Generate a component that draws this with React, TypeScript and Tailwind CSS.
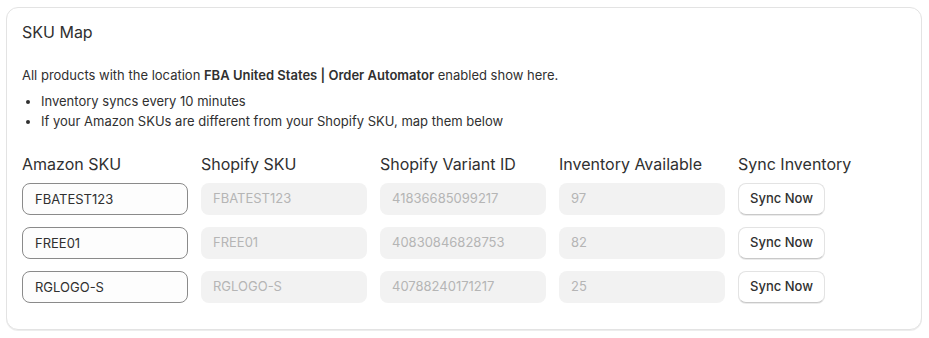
const rows = [
	{ amazon: "FBATEST123", shopify: "FBATEST123", variant: "41836685099217", qty: "97" },
	{ amazon: "FREE01", shopify: "FREE01", variant: "40830846828753", qty: "82" },
	{ amazon: "RGLOGO-S", shopify: "RGLOGO-S", variant: "40788240171217", qty: "25" },
];

const headers = ["Amazon SKU", "Shopify SKU", "Shopify Variant ID", "Inventory Available", "Sync Inventory"];

export default function App() {
	return (
		<div className="min-h-[338px] bg-white pl-[6px] pt-[7px] font-['Inter',sans-serif] text-[#303030]">
			<div className="w-[916px] rounded-[12px] border border-[#e3e3e3] bg-white px-[15px] pt-[12px] pb-[26px] shadow-[0_1px_0_rgba(0,0,0,0.07)]">
				{/* Title */}
				<h2 className="text-[16px] leading-[24px] font-normal">SKU Map</h2>

				{/* Description */}
				<p className="mt-[21px] text-[13px] leading-[20px]">
					All products with the location <span className="font-semibold">FBA United States | Order Automator</span>{" "}
					enabled show here.
				</p>
				<ul className="mt-[6px] list-disc pl-[19px] text-[13px] leading-[20px]">
					<li>Inventory syncs every 10 minutes</li>
					<li>If your Amazon SKUs are different from your Shopify SKU, map them below</li>
				</ul>

				{/* Table */}
				<div className="mt-[21px] grid grid-cols-[166px_166px_166px_166px_auto] gap-x-[13px] gap-y-[12px]">
					{headers.map((h) => (
						<div key={h} className="-mb-[5px] text-[16px] leading-[24px]">
							{h}
						</div>
					))}
					{rows.map((r) => (
						<div key={r.amazon} className="contents">
							<input
								defaultValue={r.amazon}
								className="h-[32px] w-full rounded-[8px] border border-[#8a8a8a] bg-[#fdfdfd] px-[12px] text-[13px] text-[#303030] outline-none"
							/>
							<div className="flex h-[32px] items-center rounded-[8px] bg-[#f2f2f2] px-[12px] text-[13px] text-[#b5b5b5]">
								{r.shopify}
							</div>
							<div className="flex h-[32px] items-center rounded-[8px] bg-[#f2f2f2] px-[12px] text-[13px] text-[#b5b5b5]">
								{r.variant}
							</div>
							<div className="flex h-[32px] items-center rounded-[8px] bg-[#f2f2f2] px-[12px] text-[13px] text-[#b5b5b5]">
								{r.qty}
							</div>
							<div>
								<button className="h-[32px] w-[87px] rounded-[8px] border border-[#e3e3e3] border-b-[#c9c9c9] bg-white text-[13px] font-medium text-[#303030] shadow-[0_1px_0_rgba(0,0,0,0.08)]">
									Sync Now
								</button>
							</div>
						</div>
					))}
				</div>
			</div>
		</div>
	);
}
